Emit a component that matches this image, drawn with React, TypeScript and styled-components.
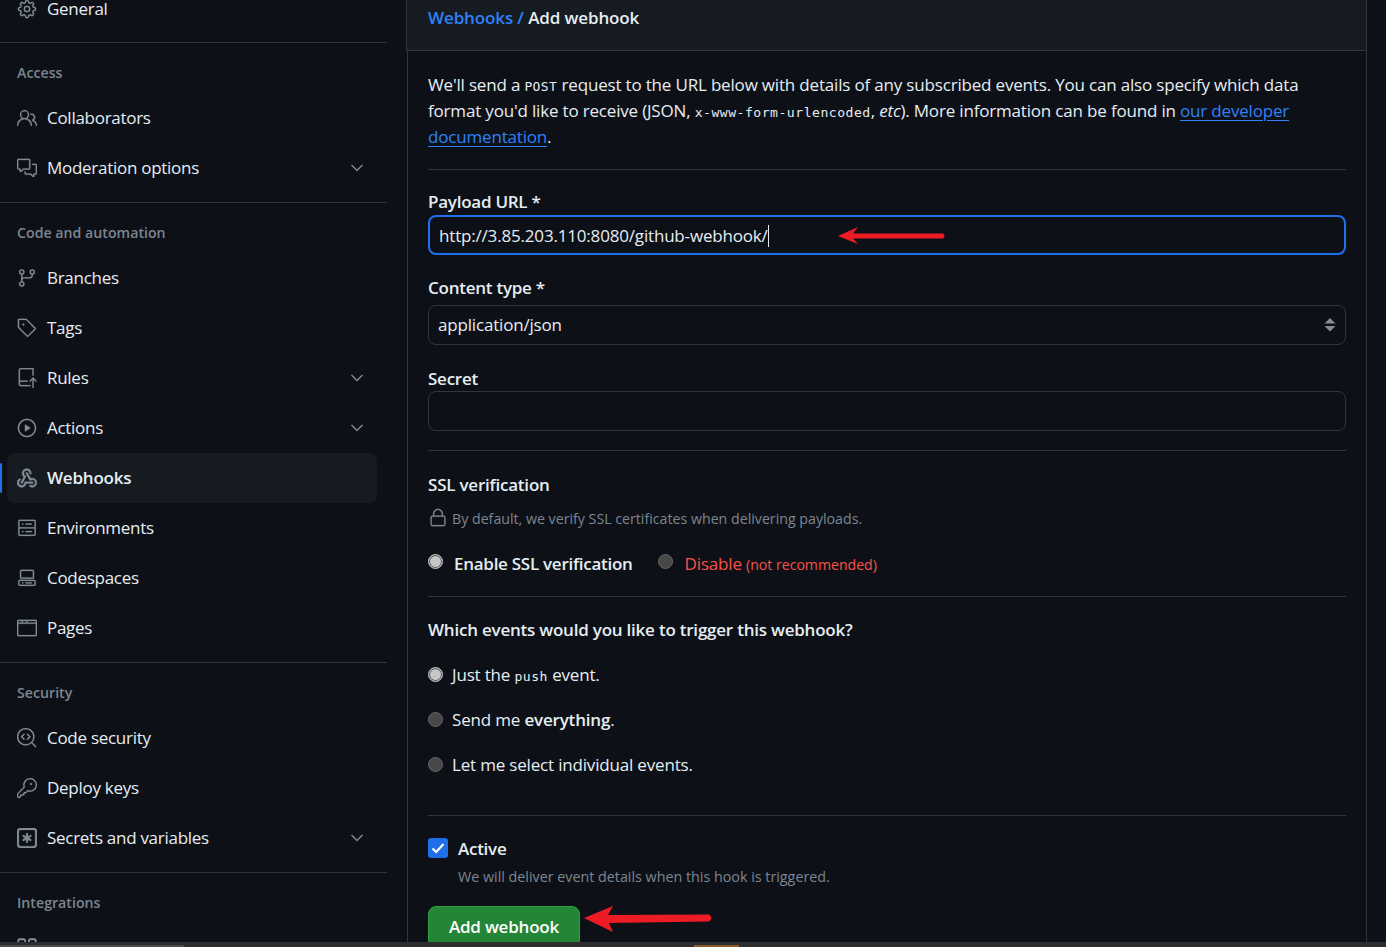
import React from "react";
import styled, { createGlobalStyle } from "styled-components";
import {
  GoBrowser,
  GoChevronDown,
  GoCodescan,
  GoCodespaces,
  GoCommentDiscussion,
  GoGear,
  GoGitBranch,
  GoKey,
  GoLock,
  GoPeople,
  GoPlay,
  GoRepoPush,
  GoServer,
  GoTag,
} from "react-icons/go";

const GlobalStyle = createGlobalStyle`
  html, body {
    margin: 0;
    height: 947px;
    overflow: hidden;
    background: #0d1117;
    color: #e6edf3;
    font-family: "Open Sans", "Noto Sans", sans-serif;
  }
`;

const WebhookIcon = () => (
  <svg viewBox="0 0 16 16" width="1em" height="1em" fill="currentColor">
    <path d="M5.5 4.25a2.25 2.25 0 0 1 4.5 0 .75.75 0 0 0 1.5 0 3.75 3.75 0 1 0-6.14 2.889l-2.272 4.258a.75.75 0 0 0 1.324.706L7 7.25a.75.75 0 0 0-.309-1.015A2.25 2.25 0 0 1 5.5 4.25Z" />
    <path d="M7.364 3.607a.75.75 0 0 1 1.03.257l2.608 4.349a3.75 3.75 0 1 1-.628 6.785.75.75 0 0 1 .752-1.299 2.25 2.25 0 1 0-.033-3.88.75.75 0 0 1-1.03-.256L7.107 4.636a.75.75 0 0 1 .257-1.03Z" />
    <path d="M2.9 8.776A.75.75 0 0 1 2.625 9.8 2.25 2.25 0 1 0 6 11.75a.75.75 0 0 1 .75-.751h5.5a.75.75 0 0 1 0 1.5H7.425a3.751 3.751 0 1 1-5.55-3.998.75.75 0 0 1 1.024.274Z" />
  </svg>
);

const KeyAsteriskIcon = () => (
  <svg viewBox="0 0 16 16" width="1em" height="1em" fill="currentColor">
    <path d="M0 2.75A2.75 2.75 0 0 1 2.75 0h10.5A2.75 2.75 0 0 1 16 2.75v10.5A2.75 2.75 0 0 1 13.25 16H2.75A2.75 2.75 0 0 1 0 13.25ZM2.75 1.5c-.69 0-1.25.56-1.25 1.25v10.5c0 .69.56 1.25 1.25 1.25h10.5c.69 0 1.25-.56 1.25-1.25V2.75c0-.69-.56-1.25-1.25-1.25Z" />
    <path d="M8 4a.75.75 0 0 1 .75.75V6.7l1.69-.975a.75.75 0 0 1 .75 1.3L9.5 8l1.69.976a.75.75 0 0 1-.75 1.298L8.75 9.3v1.951a.75.75 0 0 1-1.5 0V9.299l-1.69.976a.75.75 0 0 1-.75-1.298L6.5 8l-1.69-.975a.75.75 0 0 1 .75-1.3l1.69.976V4.75A.75.75 0 0 1 8 4Z" />
  </svg>
);

const AppsIcon = () => (
  <svg viewBox="0 0 16 16" width="1em" height="1em" fill="none" stroke="currentColor" strokeWidth="1.5">
    <rect x="1" y="1" width="5.5" height="5.5" rx="1.2" />
    <rect x="9.5" y="1" width="5.5" height="5.5" rx="1.2" />
    <rect x="1" y="9.5" width="5.5" height="5.5" rx="1.2" />
    <rect x="9.5" y="9.5" width="5.5" height="5.5" rx="1.2" />
  </svg>
);

type NavEntry = {
  label: string;
  icon: React.ReactNode;
  expand?: boolean;
  active?: boolean;
};

type NavGroup = {
  title?: string;
  items: NavEntry[];
};

const groups: NavGroup[] = [
  { items: [{ label: "General", icon: <GoGear /> }] },
  {
    title: "Access",
    items: [
      { label: "Collaborators", icon: <GoPeople /> },
      { label: "Moderation options", icon: <GoCommentDiscussion />, expand: true },
    ],
  },
  {
    title: "Code and automation",
    items: [
      { label: "Branches", icon: <GoGitBranch /> },
      { label: "Tags", icon: <GoTag /> },
      { label: "Rules", icon: <GoRepoPush />, expand: true },
      { label: "Actions", icon: <GoPlay />, expand: true },
      { label: "Webhooks", icon: <WebhookIcon />, active: true },
      { label: "Environments", icon: <GoServer /> },
      { label: "Codespaces", icon: <GoCodespaces /> },
      { label: "Pages", icon: <GoBrowser /> },
    ],
  },
  {
    title: "Security",
    items: [
      { label: "Code security", icon: <GoCodescan /> },
      { label: "Deploy keys", icon: <GoKey /> },
      { label: "Secrets and variables", icon: <KeyAsteriskIcon />, expand: true },
    ],
  },
  {
    title: "Integrations",
    items: [{ label: "GitHub Apps", icon: <AppsIcon /> }],
  },
];

export default function App() {
  return (
    <>
      <GlobalStyle />
      <Page>
        <Sidebar>
          {groups.map((group) => (
            <Group key={group.title ?? "top"}>
              {group.title && <GroupTitle>{group.title}</GroupTitle>}
              {group.items.map((item) => (
                <NavItem key={item.label} $active={item.active}>
                  <NavIcon>{item.icon}</NavIcon>
                  <NavLabel $active={item.active}>{item.label}</NavLabel>
                  {item.expand && (
                    <Chevron>
                      <GoChevronDown />
                    </Chevron>
                  )}
                </NavItem>
              ))}
            </Group>
          ))}
        </Sidebar>
        <Panel>
          <PanelHeader>
            <Crumb>Webhooks /</Crumb> <CrumbCurrent>Add webhook</CrumbCurrent>
          </PanelHeader>
          <PanelBody>
            <Intro>
              We'll send a <Caps>POST</Caps> request to the URL below with details of any subscribed
              events. You can also specify which data format you'd like to receive (JSON,{" "}
              <Code>x-www-form-urlencoded</Code>, <em>etc</em>). More information can be found in{" "}
              <DocLink>our developer documentation</DocLink>.
            </Intro>
            <Rule $top={19} />
            <FieldLabel $top={19} $bottom={0}>
              Payload URL *
            </FieldLabel>
            <UrlInput>
              <span>http://3.85.203.110:8080/github-webhook/</span>
              <Caret />
              <UrlArrow width="110" height="20" viewBox="0 0 110 20">
                <path d="M0 10 L20 1 L15 7.5 L105 7.5 Q108 10 105 12.5 L15 12.5 L20 18 Z" fill="#ed1c24" />
              </UrlArrow>
            </UrlInput>
            <FieldLabel $top={20} $bottom={4}>
              Content type *
            </FieldLabel>
            <TextBox>
              application/json
              <SelectCaret width="12" height="14" viewBox="0 0 12 14">
                <path d="M6 0 L11.5 5.5 L0.5 5.5 Z M0.5 8 L11.5 8 L6 13.5 Z" fill="#848d97" />
              </SelectCaret>
            </TextBox>
            <FieldLabel $top={21} $bottom={-1}>
              Secret
            </FieldLabel>
            <TextBox />
            <Rule $top={19} />
            <SectionTitle $top={21}>SSL verification</SectionTitle>
            <Note>
              <GoLock />
              By default, we verify SSL certificates when delivering payloads.
            </Note>
            <SslRow>
              <SslRadio $checked />
              <StrongOption>Enable SSL verification</StrongOption>
              <SslRadio $second />
              <Danger>
                Disable <small>(not recommended)</small>
              </Danger>
            </SslRow>
            <Rule $top={18} />
            <SectionTitle $top={20}>Which events would you like to trigger this webhook?</SectionTitle>
            <EventList>
              <EventRow>
                <Radio $checked />
                <span>
                  Just the <Code>push</Code> event.
                </span>
              </EventRow>
              <EventRow>
                <Radio />
                <span>
                  Send me <b>everything</b>.
                </span>
              </EventRow>
              <EventRow>
                <Radio />
                <span>Let me select individual events.</span>
              </EventRow>
            </EventList>
            <Rule $top={38} />
            <ActiveRow>
              <Checkbox>
                <svg width="16" height="16" viewBox="0 0 16 16">
                  <path d="M2.5 8.5 L6.2 12 L13.5 4" fill="none" stroke="#fff" strokeWidth="2.2" />
                </svg>
              </Checkbox>
              <StrongOption>Active</StrongOption>
            </ActiveRow>
            <ActiveHint>We will deliver event details when this hook is triggered.</ActiveHint>
            <SubmitRow>
              <SubmitButton>Add webhook</SubmitButton>
              <SubmitArrow width="132" height="28" viewBox="0 0 132 28">
                <path d="M1 13 L30 1 L25 10 L126 9.5 Q131 13 126 16.5 L26 18 L30 27 Z" fill="#ed1c24" />
              </SubmitArrow>
            </SubmitRow>
          </PanelBody>
        </Panel>
      </Page>
      <TaskStrip>
        <TaskThumb $width={184} />
        <TaskThumb $width={45} $left={694} $color="#8a5a2a" />
      </TaskStrip>
    </>
  );
}

const Page = styled.div`
  display: flex;
  height: 947px;
  overflow: hidden;
`;

const Sidebar = styled.nav`
  width: 387px;
  flex: none;
  margin-top: -17px;
`;

const Group = styled.div`
  padding: 1px 0 9px 7px;
  border-bottom: 1px solid #30363d;

  &:first-child {
    padding-bottom: 8px;
  }

  &:last-child {
    border-bottom: 0;
  }
`;

const GroupTitle = styled.div`
  height: 40px;
  margin-top: 9px;
  padding: 0 10px 2px;
  box-sizing: border-box;
  display: flex;
  align-items: center;
  font-size: 14.2px;
  font-weight: 600;
  color: #7d8590;
`;

const NavItem = styled.div<{ $active?: boolean }>`
  position: relative;
  display: flex;
  align-items: center;
  height: 50px;
  width: 370px;
  padding: 0 10px;
  box-sizing: border-box;
  border-radius: 8px;
  background: ${(p) => (p.$active ? "#161b22" : "transparent")};

  &::before {
    content: "";
    display: ${(p) => (p.$active ? "block" : "none")};
    position: absolute;
    left: -7px;
    top: 10px;
    width: 2px;
    height: 30px;
    border-radius: 2px;
    background: #1f6feb;
  }
`;

const NavIcon = styled.span`
  display: flex;
  width: 20px;
  margin-right: 10px;
  font-size: 20px;
  color: #848d97;

  path {
    stroke: currentColor;
    stroke-width: 0.25;
  }
`;

const NavLabel = styled.span<{ $active?: boolean }>`
  padding-bottom: 2px;
  font-size: 17px;
  letter-spacing: ${(p) => (p.$active ? "-0.2px" : "-0.28px")};
  font-weight: ${(p) => (p.$active ? 600 : 400)};
  color: #e6edf3;
`;

const Chevron = styled.span`
  display: flex;
  margin-left: auto;
  font-size: 20px;
  color: #848d97;
`;

const Panel = styled.main`
  width: 960px;
  margin-left: 20px;
  flex: none;
  box-sizing: border-box;
  border-left: 1px solid #30363d;
  border-right: 1px solid #30363d;
`;

const PanelHeader = styled.div`
  height: 51px;
  margin-left: -2px;
  box-sizing: border-box;
  padding: 6px 20px 0 21px;
  background: #161b22;
  border-left: 1px solid #30363d;
  border-bottom: 1px solid #30363d;
  font-size: 17px;
  font-weight: 600;
  letter-spacing: -0.12px;
`;

const Crumb = styled.span`
  color: #2f81f7;
`;

const CrumbCurrent = styled.span`
  color: #e6edf3;
`;

const PanelBody = styled.div`
  padding: 21px 20px 0;
  font-size: 17px;
  letter-spacing: -0.18px;
`;

const Intro = styled.p`
  margin: 0;
  line-height: 26px;
`;

const Caps = styled.code`
  font-family: "DejaVu Sans Mono", monospace;
  font-size: 13px;
  line-height: 1;
  letter-spacing: 0.4px;
`;

const Code = styled.code`
  font-family: "DejaVu Sans Mono", monospace;
  font-size: 13.1px;
  line-height: 1;
  letter-spacing: 0.5px;
`;

const DocLink = styled.a`
  color: #2f81f7;
  text-decoration: underline;
  text-underline-offset: 3px;
`;

const Rule = styled.hr<{ $top: number }>`
  margin: ${(p) => p.$top}px 0 0;
  border: 0;
  border-top: 1px solid #30363d;
`;

const FieldLabel = styled.div<{ $top: number; $bottom: number }>`
  margin-top: ${(p) => p.$top}px;
  margin-bottom: ${(p) => p.$bottom}px;
  font-weight: 600;
  line-height: 26px;
  letter-spacing: -0.25px;
`;

const UrlInput = styled.div`
  position: relative;
  display: flex;
  align-items: center;
  height: 40px;
  padding: 1px 9px 0;
  box-sizing: border-box;
  border: 2px solid #1f6feb;
  border-radius: 8px;
`;

const Caret = styled.i`
  width: 1px;
  height: 22px;
  background: #e6edf3;
`;

const UrlArrow = styled.svg`
  position: absolute;
  left: 408px;
  top: 9px;
`;

const TextBox = styled.div`
  position: relative;
  display: flex;
  align-items: center;
  height: 40px;
  padding: 0 9px 2px;
  box-sizing: border-box;
  border: 1px solid #30363d;
  border-radius: 8px;
`;

const SelectCaret = styled.svg`
  position: absolute;
  right: 9px;
  top: 12px;
`;

const SectionTitle = styled.div<{ $top: number }>`
  margin-top: ${(p) => p.$top}px;
  font-weight: 600;
  line-height: 26px;
  letter-spacing: -0.22px;
`;

const Note = styled.div`
  display: flex;
  align-items: center;
  gap: 4px;
  height: 20px;
  margin-top: 10px;
  font-size: 14.2px;
  letter-spacing: 0;
  color: #7d8590;

  svg {
    font-size: 20px;
  }

  path {
    stroke: currentColor;
    stroke-width: 0.25;
  }
`;

const SslRow = styled.div`
  display: flex;
  align-items: center;
  height: 30px;
  margin-top: 20px;
`;

const Radio = styled.span<{ $checked?: boolean }>`
  width: 15px;
  height: 15px;
  flex: none;
  box-sizing: border-box;
  border-radius: 50%;
  background: ${(p) => (p.$checked ? "#c6c6c6" : "#484848")};
  border: 1.5px solid ${(p) => (p.$checked ? "#bdbdbd" : "#666")};
  box-shadow: ${(p) => (p.$checked ? "inset 0 0 0 1px #4c4c4c" : "none")};
`;

const SslRadio = styled(Radio)<{ $second?: boolean }>`
  margin: 0 ${(p) => (p.$second ? 12 : 11)}px 4px ${(p) => (p.$second ? 25 : 0)}px;
`;

const StrongOption = styled.span`
  font-weight: 600;
  letter-spacing: -0.27px;
`;

const Danger = styled.span`
  color: #f85149;

  small {
    font-size: 14.1px;
    letter-spacing: 0;
  }
`;

const EventList = styled.div`
  display: flex;
  flex-direction: column;
  gap: 19px;
  margin-top: 18px;
`;

const EventRow = styled.label`
  display: flex;
  align-items: center;
  gap: 9px;
  height: 26px;

  b {
    font-weight: 600;
  }
`;

const ActiveRow = styled.div`
  display: flex;
  align-items: center;
  gap: 10px;
  height: 26px;
  margin-top: 19px;
`;

const Checkbox = styled.span`
  display: flex;
  align-items: center;
  justify-content: center;
  width: 20px;
  height: 20px;
  border-radius: 3px;
  background: #1f6feb;
`;

const ActiveHint = styled.div`
  margin: 6px 0 0 30px;
  height: 20px;
  line-height: 20px;
  font-size: 14.3px;
  letter-spacing: 0;
  color: #7d8590;
`;

const SubmitRow = styled.div`
  position: relative;
  margin-top: 19px;
`;

const SubmitArrow = styled.svg`
  position: absolute;
  left: 155px;
  top: -1px;
`;

const SubmitButton = styled.button`
  display: block;
  width: 152px;
  height: 42px;
  padding: 0 0 2px;
  border: 1px solid #2ea043;
  border-radius: 8px;
  background: #238636;
  color: #fff;
  font: 600 17px "Open Sans", sans-serif;
  letter-spacing: -0.2px;
`;

const TaskStrip = styled.div`
  position: fixed;
  left: 0;
  right: 0;
  bottom: 0;
  height: 5px;
  background: #2d2e30;
`;

const TaskThumb = styled.span<{ $width: number; $left?: number; $color?: string }>`
  position: absolute;
  bottom: 0;
  height: 2px;
  left: ${(p) => p.$left ?? 0}px;
  width: ${(p) => p.$width}px;
  background: ${(p) => p.$color ?? "#4a4b4e"};
`;
